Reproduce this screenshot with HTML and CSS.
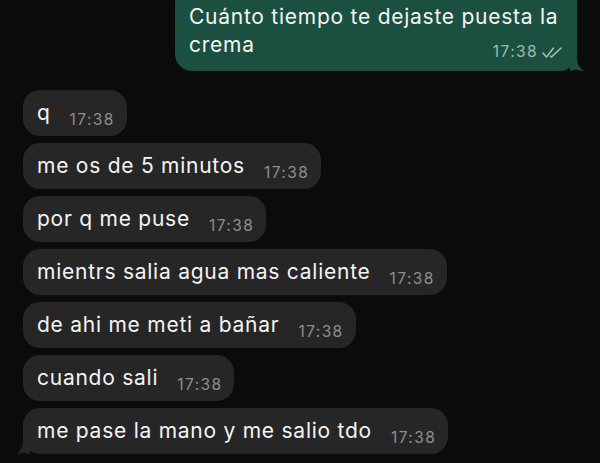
FILE: index.html
```html
<!DOCTYPE html>
<html lang="es">
<head>
    <meta charset="UTF-8">
    <meta name="viewport" content="width=device-width, initial-scale=1.0">
    <title>Chat</title>
    <link rel="stylesheet" href="styles.css">
</head>
<body>
    <div class="chat">
        <div class="msg out">
            <span class="text">Cuánto tiempo te dejaste puesta la crema</span>
            <span class="meta">17:38
                <svg class="ticks" width="21" height="11" viewBox="0 0 21 11">
                    <path d="M1 6 L4.5 10 L11.5 1" fill="none" stroke="#a9c0b6" stroke-width="1.5" stroke-linecap="round" stroke-linejoin="round"/>
                    <path d="M8.5 9 L9.5 10 L19 1" fill="none" stroke="#a9c0b6" stroke-width="1.5" stroke-linecap="round" stroke-linejoin="round"/>
                </svg>
            </span>
            <svg class="tail tail-out" width="14" height="14" viewBox="0 0 14 14">
                <path d="M0 0 H7 C7 6 9 11 14 14 C10 14 7.5 13.2 6 12.3 Q3 14 0 14 Z" fill="#1b5040"/>
            </svg>
        </div>

        <div class="msg in"><span class="text">q</span><span class="meta">17:38</span></div>
        <div class="msg in"><span class="text">me os de 5 minutos</span><span class="meta">17:38</span></div>
        <div class="msg in"><span class="text">por q me puse</span><span class="meta">17:38</span></div>
        <div class="msg in"><span class="text">mientrs salia agua mas caliente</span><span class="meta">17:38</span></div>
        <div class="msg in"><span class="text">de ahi me meti a bañar</span><span class="meta">17:38</span></div>
        <div class="msg in"><span class="text">cuando sali</span><span class="meta">17:38</span></div>
        <div class="msg in">
            <span class="text">me pase la mano y me salio tdo</span><span class="meta">17:38</span>
            <svg class="tail tail-in" width="14" height="14" viewBox="0 0 14 14">
                <path d="M14 0 H7 C7 6 5 11 0 14 C4 14 6.5 13.2 8 12.3 Q11 14 14 14 Z" fill="#262626"/>
            </svg>
        </div>
    </div>
</body>
</html>
```

FILE: styles.css
```css
body {
    margin: 0;
    background-color: #0b0b0b;
    font-family: Inter, "Liberation Sans", Arial, sans-serif;
    color: #f4f4f4;
    overflow: hidden;
}
.chat {
    display: flex;
    flex-direction: column;
    align-items: flex-start;
    gap: 7px;
    padding: 0 23px 0 23px;
    margin-top: -14px;
}
.msg {
    position: relative;
    border-radius: 17px;
    box-sizing: border-box;
}
.text {
    font-size: 21px;
    line-height: 26px;
    letter-spacing: 0.75px;
}
.meta {
    font-size: 15.5px;
    line-height: 18px;
    letter-spacing: 1.4px;
    color: #8e8e8e;
    white-space: nowrap;
}
.in {
    display: flex;
    align-items: flex-end;
    background-color: #262626;
    height: 46px;
    padding: 0 12px 7px 14px;
}
.in .meta {
    margin-left: 19px;
}
.in .text {
    padding-bottom: 3px;
}
.out {
    align-self: flex-end;
    width: 402px;
    background-color: #1b5040;
    padding: 17px 14px 10px 14px;
    margin-bottom: 12px;
}
.out .text {
    line-height: 28px;
}
.out .meta {
    float: right;
    margin-top: 12px;
    color: #a4bab0;
    display: flex;
    align-items: center;
    gap: 4px;
}
.ticks {
    display: block;
}
.tail {
    position: absolute;
    bottom: 0;
}
.tail-out {
    right: -7px;
}
.tail-in {
    left: -7px;
}
```
